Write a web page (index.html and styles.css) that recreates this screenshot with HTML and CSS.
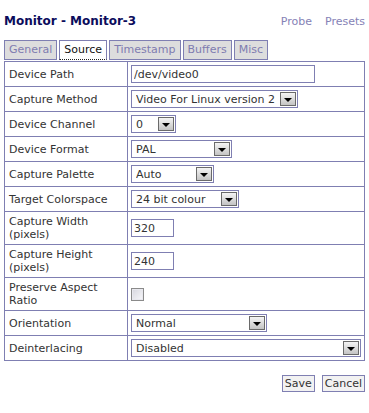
FILE: index.html
```html
<!DOCTYPE html>
<html lang="en">

<head>
    <meta charset="UTF-8">
    <meta name="viewport" content="width=device-width, initial-scale=1.0">
    <title>Monitor - Monitor-3</title>
    <link rel="stylesheet" href="styles.css">
</head>

<body>
    <div class="page">
        <div class="header">
            <h2>Monitor - Monitor-3</h2>
            <div class="links">
                <a href="#">Probe</a>
                <a href="#">Presets</a>
            </div>
        </div>

        <ul class="tabs">
            <li>General</li>
            <li class="active">Source</li>
            <li>Timestamp</li>
            <li>Buffers</li>
            <li>Misc</li>
        </ul>

        <table class="settings">
            <tr>
                <td class="label">Device Path</td>
                <td><input type="text" class="text path" value="/dev/video0"></td>
            </tr>
            <tr>
                <td class="label">Capture Method</td>
                <td>
                    <div class="select method">
                        <select><option>Video For Linux version 2</option></select>
                        <span class="arrow"></span>
                    </div>
                </td>
            </tr>
            <tr>
                <td class="label">Device Channel</td>
                <td>
                    <div class="select channel">
                        <select><option>0</option></select>
                        <span class="arrow"></span>
                    </div>
                </td>
            </tr>
            <tr>
                <td class="label">Device Format</td>
                <td>
                    <div class="select format">
                        <select><option>PAL</option></select>
                        <span class="arrow"></span>
                    </div>
                </td>
            </tr>
            <tr>
                <td class="label">Capture Palette</td>
                <td>
                    <div class="select palette">
                        <select><option>Auto</option></select>
                        <span class="arrow"></span>
                    </div>
                </td>
            </tr>
            <tr>
                <td class="label">Target Colorspace</td>
                <td>
                    <div class="select colour">
                        <select><option>24 bit colour</option></select>
                        <span class="arrow"></span>
                    </div>
                </td>
            </tr>
            <tr>
                <td class="label">Capture Width<br>(pixels)</td>
                <td><input type="text" class="text small" value="320"></td>
            </tr>
            <tr>
                <td class="label">Capture Height<br>(pixels)</td>
                <td><input type="text" class="text small" value="240"></td>
            </tr>
            <tr>
                <td class="label">Preserve Aspect<br>Ratio</td>
                <td><span class="check"></span></td>
            </tr>
            <tr>
                <td class="label">Orientation</td>
                <td>
                    <div class="select orient">
                        <select><option>Normal</option></select>
                        <span class="arrow"></span>
                    </div>
                </td>
            </tr>
            <tr>
                <td class="label">Deinterlacing</td>
                <td>
                    <div class="select deint">
                        <select><option>Disabled</option></select>
                        <span class="arrow"></span>
                    </div>
                </td>
            </tr>
        </table>

        <div class="buttons">
            <button>Save</button>
            <button>Cancel</button>
        </div>
    </div>
</body>

</html>
```

FILE: styles.css
```css
* {
    margin: 0;
    padding: 0;
    box-sizing: border-box;
}

body {
    font-family: 'DejaVu Sans', Verdana, sans-serif;
    font-size: 11px;
    color: #333333;
    background: #fff;
}

.page {
    padding: 0 4px;
}

.header {
    display: flex;
    justify-content: space-between;
    align-items: center;
    height: 40px;
    padding-top: 2px;
}

.header h2 {
    font-size: 12px;
    font-weight: bold;
    color: #0c0c5c;
}

.header .links {
    display: flex;
    gap: 13px;
}

.header a {
    color: #8582b6;
    text-decoration: none;
}

.tabs {
    list-style: none;
    display: flex;
    gap: 2px;
    height: 20px;
}

.tabs li {
    border: 1px solid #7f7fb2;
    background: #dddddd;
    color: #7f7cb0;
    padding: 0 4px;
    line-height: 18px;
}

.tabs .active {
    background: #fff;
    color: #111;
    border-bottom: 1px dotted #222;
}

.settings {
    width: 100%;
    margin-top: 1px;
    border-collapse: collapse;
}

.settings td {
    border: 1px solid #7f7fb2;
    padding: 3px 3px;
    line-height: 13px;
    vertical-align: middle;
}

.settings .label {
    width: 123px;
    padding-left: 4px;
    color: #333;
}

.text {
    display: block;
    height: 18px;
    border: 1px solid #7f7fb2;
    font: inherit;
    color: #333;
    padding: 0 2px;
    outline: none;
}

.text.path {
    width: 184px;
}

.text.small {
    width: 43px;
}

.select {
    display: flex;
    align-items: center;
    height: 18px;
    border: 1px solid #7f7fb2;
    padding-right: 1px;
}

.select select {
    flex: 1;
    min-width: 0;
    appearance: none;
    border: none;
    background: none;
    font: inherit;
    color: #333;
    padding: 0 4px;
    outline: none;
}

.select .arrow {
    display: flex;
    align-items: center;
    justify-content: center;
    width: 16px;
    height: 14px;
    border: 1px solid #6a6a6a;
    background: linear-gradient(#f4f4f4, #c4c4c4);
}

.select .arrow::after {
    content: "";
    border-left: 4px solid transparent;
    border-right: 4px solid transparent;
    border-top: 4px solid #000;
    margin-top: 1px;
}

.select.method { width: 167px; }
.select.channel { width: 45px; }
.select.format { width: 101px; }
.select.palette { width: 83px; }
.select.colour { width: 108px; }
.select.orient { width: 136px; }
.select.deint { width: 230px; }

.check {
    display: block;
    width: 13px;
    height: 13px;
    border: 1px solid #8a8a8a;
    background: linear-gradient(135deg, #d6d6de, #f8f8fb);
    box-shadow: inset 0 0 0 1px #e8e8ee;
}

.buttons {
    display: flex;
    justify-content: flex-end;
    gap: 7px;
    margin-top: 14px;
}

.buttons button {
    font: inherit;
    color: #333;
    background: #f2f2f2;
    border: 1px solid #7f7fb2;
    height: 17px;
    padding: 0 2px;
}
```
